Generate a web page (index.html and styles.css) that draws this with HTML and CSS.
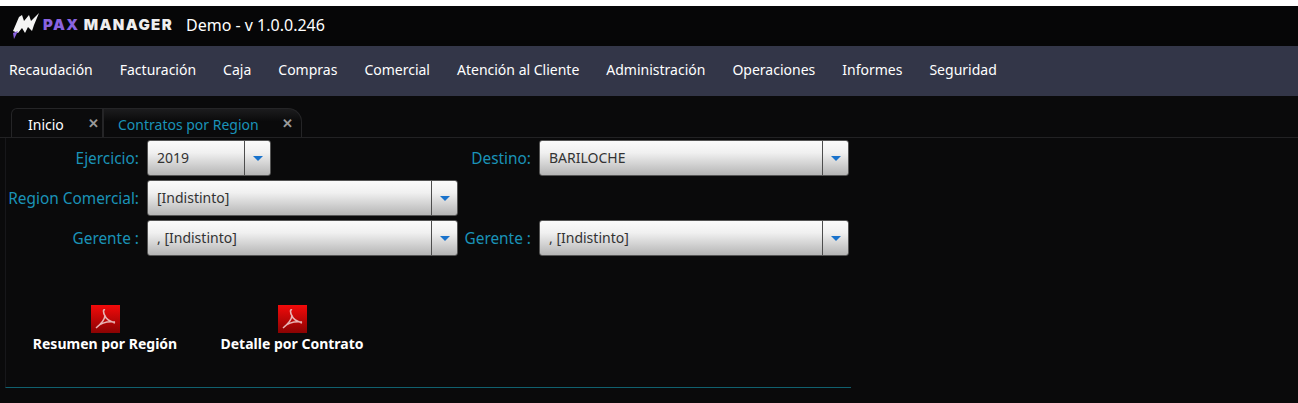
FILE: index.html
```html
<!DOCTYPE html>
<html lang="en">
  <head>
    <meta charset="UTF-8" />
    <title>Pax Manager - Contratos por Region</title>
    <link rel="stylesheet" href="styles.css">
  </head>
  <body>
    <header class="top-bar">
      <div class="logo">
        <svg class="logo-mark" width="28" height="26" viewBox="0 0 28 26">
          <path d="M1 18 L7 4 L10 2 L12 8 L17 2 L19 8 L27 0 L22 12 L20 18 L16 14 L13 20 L10 15 L6 20 Z" fill="#f4f4f4" />
          <path d="M1 20 L6 18 L2 26 Z" fill="#8a63e0" />
        </svg>
        <span class="logo-text"><b>PAX</b> MANAGER</span>
      </div>
      <span class="version">Demo - v 1.0.0.246</span>
    </header>

    <nav class="main-nav">
      <a>Recaudación</a>
      <a>Facturación</a>
      <a>Caja</a>
      <a>Compras</a>
      <a>Comercial</a>
      <a>Atención al Cliente</a>
      <a>Administración</a>
      <a>Operaciones</a>
      <a>Informes</a>
      <a>Seguridad</a>
    </nav>

    <div class="tabs">
      <div class="tab">Inicio <span class="tab-close">✕</span></div>
      <div class="tab tab-active">Contratos por Region <span class="tab-close">✕</span></div>
    </div>

    <main class="panel">
      <div class="form">
        <label>Ejercicio:</label>
        <div class="combo combo-short"><span class="combo-text">2019</span><span class="combo-btn"><i></i></span></div>
        <label>Destino:</label>
        <div class="combo"><span class="combo-text">BARILOCHE</span><span class="combo-btn"><i></i></span></div>

        <label>Region Comercial:</label>
        <div class="combo"><span class="combo-text">[Indistinto]</span><span class="combo-btn"><i></i></span></div>
        <span></span>
        <span></span>

        <label>Gerente :</label>
        <div class="combo"><span class="combo-text">, [Indistinto]</span><span class="combo-btn"><i></i></span></div>
        <label>Gerente :</label>
        <div class="combo"><span class="combo-text">, [Indistinto]</span><span class="combo-btn"><i></i></span></div>
      </div>

      <div class="reports">
        <a class="report report-first">
          <svg class="pdf-icon" width="29" height="28" viewBox="0 0 29 28">
            <use href="#pdf" />
          </svg>
          <span>Resumen por Región</span>
        </a>
        <a class="report">
          <svg class="pdf-icon" width="29" height="28" viewBox="0 0 29 28">
            <use href="#pdf" />
          </svg>
          <span>Detalle por Contrato</span>
        </a>
      </div>
    </main>

    <svg width="0" height="0" class="defs">
      <defs>
        <linearGradient id="pdf-bg" x1="0" y1="0" x2="0" y2="1">
          <stop offset="0" stop-color="#f30a0a" />
          <stop offset="1" stop-color="#8a0303" />
        </linearGradient>
        <g id="pdf">
          <rect width="29" height="28" fill="url(#pdf-bg)" />
          <path d="M14 5 C12 4 12 7 14 11 C15 14 18 16 24 18 M14 10 C14 14 10 19 5 23 M6 22 C10 18 16 16 24 17" fill="none" stroke="#e8b4b4" stroke-width="1.6" />
        </g>
      </defs>
    </svg>
  </body>
</html>
```
FILE: styles.css
```css
* {
  box-sizing: border-box;
}

body {
  margin: 0;
  height: 403px;
  overflow: hidden;
  background-color: #0a0a0b;
  border-top: 6px solid #ffffff;
  color: #ffffff;
  font-family: "Noto Sans", "Open Sans", sans-serif;
  font-size: 14px;
}

.defs {
  position: absolute;
}

.top-bar {
  height: 40px;
  background-color: #060607;
  display: flex;
  align-items: center;
  padding-left: 12px;
}

.logo {
  display: flex;
  align-items: center;
  gap: 3px;
  width: 174px;
}

.logo-text {
  font-family: Inter, sans-serif;
  font-weight: 900;
  font-size: 15px;
  letter-spacing: 1.4px;
  color: #eeeeee;
  white-space: nowrap;
  margin-bottom: 4px;
}

.logo-text b {
  color: #8a63e0;
  font-weight: 900;
}

.version {
  font-size: 16px;
  padding-bottom: 3px;
}

.main-nav {
  height: 50px;
  background-color: #333648;
  display: flex;
  align-items: center;
  gap: 27px;
  padding: 0 0 4px 9px;
}

.tabs {
  height: 42px;
  display: flex;
  align-items: flex-end;
  padding-left: 11px;
  border-bottom: 1px solid #222224;
}

.tab {
  height: 29px;
  width: 92px;
  display: flex;
  align-items: center;
  justify-content: space-between;
  padding: 3px 3px 0 16px;
  background-color: #0b0b0c;
  border: 1px solid #252527;
  border-bottom: none;
  border-radius: 6px 0 0 0;
}

.tab-active {
  width: 199px;
  padding: 3px 8px 0 14px;
  color: #1a93b8;
  background: linear-gradient(#1c1c1e, #0a0a0b 45%);
  border-radius: 0 14px 0 0;
}

.tab-close {
  font-size: 13px;
  font-weight: bold;
  color: #9a9a9a;
  margin-top: -4px;
}

.panel {
  width: 846px;
  margin-left: 5px;
  padding-top: 2px;
  height: 250px;
  border-left: 1px solid #17171a;
  border-bottom: 1px solid #10606f;
}

.form {
  display: grid;
  grid-template-columns: 141px 311px 81px 310px;
  grid-auto-rows: 36px;
  row-gap: 4px;
  align-items: center;
}

.form label {
  font-size: 15.4px;
  color: #1a93b8;
  text-align: right;
  white-space: nowrap;
  padding-right: 8px;
}

.combo {
  height: 36px;
  display: flex;
  border-radius: 3px;
  border: 1px solid #555555;
  background: linear-gradient(#fbfbfb, #f0f0f0 35%, #b5b5b5);
  color: #333333;
}

.combo-short {
  width: 124px;
}

.combo-text {
  flex: 1;
  padding-left: 9px;
  line-height: 34px;
}

.combo-btn {
  width: 26px;
  border-left: 1px solid #4d4d4d;
  display: flex;
  align-items: center;
  justify-content: center;
}

.combo-btn i {
  width: 0;
  height: 0;
  border-left: 5px solid transparent;
  border-right: 5px solid transparent;
  border-top: 5px solid #1872cc;
}

.reports {
  display: flex;
  margin-top: 49px;
}

.report {
  display: flex;
  flex-direction: column;
  align-items: center;
  gap: 2px;
  font-size: 14px;
  font-weight: bold;
  white-space: nowrap;
  width: 144px;
}

.report-first {
  margin-left: 27px;
  margin-right: 43px;
}

.report span {
  line-height: 18px;
}
```
